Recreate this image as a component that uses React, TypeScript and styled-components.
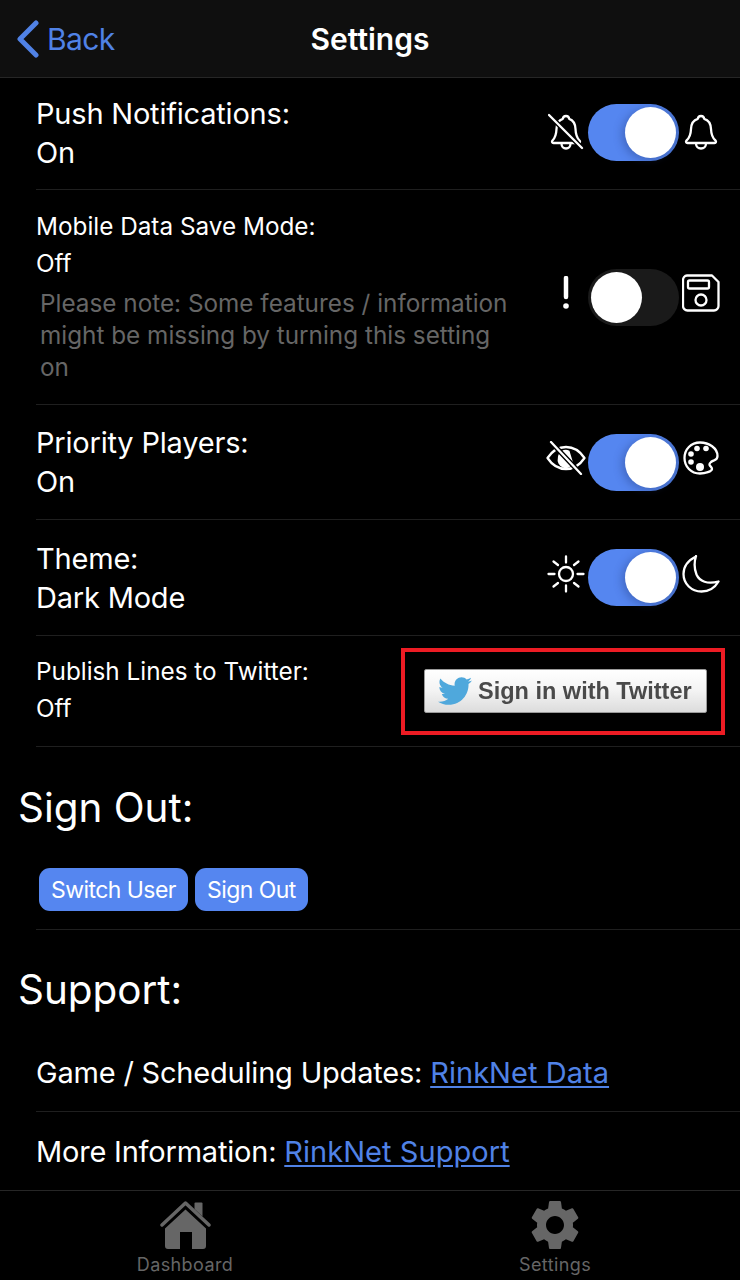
import React from "react";
import styled, { createGlobalStyle } from "styled-components";
import { FaTwitter } from "react-icons/fa";
import { MdSettings } from "react-icons/md";

const GlobalStyle = createGlobalStyle`
  html, body {
    margin: 0;
    padding: 0;
    background: #000;
  }
  body {
    font-family: Inter, "Liberation Sans", sans-serif;
    color: #fff;
  }
`;

const Page = styled.div`
  width: 740px;
  height: 1280px;
  display: flex;
  flex-direction: column;
  overflow: hidden;
  background: #000;
`;

// header
const Header = styled.header`
  height: 77px;
  flex: none;
  display: grid;
  grid-template-columns: 1fr auto 1fr;
  align-items: center;
  background: #0f0f0f;
  border-bottom: 1px solid #262626;
`;
const BackLink = styled.div`
  display: flex;
  align-items: center;
  gap: 7px;
  padding-left: 16px;
  color: #5082e6;
  font-size: 30px;
  letter-spacing: -0.6px;
`;
const Title = styled.div`
  font-size: 30px;
  font-weight: 600;
`;

const Content = styled.main`
  flex: 1;
  min-height: 0;
  overflow: hidden;
`;

// settings rows, $lift raises the contents a little off the row's centre
const Row = styled.section<{ $height: number; $lift?: number }>`
  box-sizing: border-box;
  height: ${p => p.$height}px;
  display: flex;
  align-items: center;
  justify-content: space-between;
  margin-left: 36px;
  padding: 0 21px ${p => p.$lift || 0}px 0;
  border-bottom: 1px solid #1f1f1f;
`;
const LabelBlock = styled.div<{ $lift?: number }>`
  display: flex;
  flex-direction: column;
  padding-bottom: ${p => p.$lift || 0}px;
`;
const Line = styled.div`
  font-size: 29px;
  line-height: 39px;
  letter-spacing: -0.2px;
`;
const SmallLine = styled.div`
  font-size: 24.3px;
  line-height: 37px;
`;
const Note = styled.div`
  width: 470px;
  margin: 5px 0 0 4px;
  color: #666;
  font-size: 24.3px;
  line-height: 32px;
`;

const ToggleGroup = styled.div`
  display: grid;
  grid-template-columns: 36px 91px 36px;
  column-gap: 4px;
  align-items: center;
  justify-items: center;
`;
const Track = styled.div<{ $on: boolean }>`
  width: 91px;
  height: 57px;
  box-sizing: border-box;
  padding: 3px;
  display: flex;
  justify-content: ${p => (p.$on ? "flex-end" : "flex-start")};
  border-radius: 29px;
  background: ${p => (p.$on ? "linear-gradient(90deg, #5586f0 0%, #5586f0 55%, #4a74d0 100%)" : "#1a1a1a")};
`;
const Knob = styled.div<{ $on: boolean }>`
  width: 51px;
  height: 51px;
  border-radius: 50%;
  background: #fff;
  box-shadow: ${p => (p.$on ? "-3px 2px 8px rgba(30, 50, 110, 0.35)" : "none")};
`;
// icons sit a few pixels above the toggle's centre
const Glyph = styled.svg<{ $up?: number }>`
  display: block;
  margin-bottom: ${p => p.$up ?? 8}px;
  fill: none;
  stroke: #fff;
  stroke-width: 2.3;
  stroke-linecap: round;
  stroke-linejoin: round;
`;

const Bell = () => (
  <Glyph $up={2} width="36" height="38" viewBox="0 0 36 38">
    <path d="M18 3c-1.8 0-3 1.2-3.2 2.8C10 7.2 8.200 11 8 16c-.2 5.500-1.500 9-4.500 11.500-1 1-.5 2.500 1 2.500h27c1.500 0 2-1.500 1-2.500C29.500 25 28.200 21.500 28 16c-.2-5-2-8.800-6.800-10.200C21 4.200 19.800 3 18 3z" />
    <path d="M13 30.500c0 3 2.200 5 5 5s5-2 5-5" />
  </Glyph>
);
const BellOff = () => (
  <Glyph $up={2} width="36" height="38" viewBox="0 0 36 38">
    <path d="M18 3c-1.800 0-3 1.200-3.200 2.800C10 7.200 8.700 11 8.500 16c-.2 5.500-1.500 9-4 11.500-1 1-.5 2.500 1 2.500h25c1.500 0 2-1.500 1-2.500C29 25 27.700 21.500 27.500 16c-.2-5-2-8.800-6.300-10.200C21 4.200 19.800 3 18 3z" />
    <path d="M13.500 30.500c0 3 2 5 4.500 5s4.500-2 4.500-5" />
    <path d="M1 2l33 33" stroke="#000" strokeWidth="5" />
    <path d="M1 2l33 33" />
  </Glyph>
);
const Bang = () => (
  <Glyph width="36" height="34" viewBox="0 0 36 34">
    <path d="M18 2v19" strokeWidth="4.500" />
    <circle cx="18" cy="30" r="2.800" fill="#fff" stroke="none" />
  </Glyph>
);
const Floppy = () => (
  <Glyph width="38" height="38" viewBox="0 0 38 38">
    <path d="M5 1.500h25l6.500 6.500V32a4.500 4.500 0 0 1-4.500 4.500H5.500A4.500 4.500 0 0 1 1 32V6a4.500 4.500 0 0 1 4-4.500z" />
    <rect x="6" y="6.500" width="21" height="8" rx="1.500" />
    <circle cx="19" cy="26" r="5.500" />
  </Glyph>
);
const EyeOff = () => (
  <Glyph width="40" height="34" viewBox="0 0 40 34">
    <path d="M1.500 17C6.500 9.500 12.500 6 20 6s13.500 3.500 18.500 11C33.500 24.500 27.500 28 20 28S6.500 24.500 1.500 17z" />
    <path d="M13 17a7 7 0 0 1 9.500-6.500L26 22a7 7 0 0 1-13-5z" fill="#fff" />
    <path d="M5 1l30 32" stroke="#000" strokeWidth="5" />
    <path d="M5 1l30 32" />
  </Glyph>
);
const Palette = () => (
  <Glyph width="36" height="34" viewBox="0 0 36 34">
    <path d="M17 1.500C8 1.500 1.500 8.500 1.500 17S8 32.500 17 32.500c5 0 12-2 12-4.500 0-3-5-3.500-1-7 3-2.500 6.500-1 6.500-6C34.500 7 26 1.500 17 1.500z" />
    <g fill="#fff" stroke="none">
      <circle cx="8" cy="13" r="2.800" />
      <circle cx="14" cy="7.500" r="2.800" />
      <circle cx="23" cy="7.500" r="2.800" />
      <circle cx="8" cy="21" r="2.800" />
      <circle cx="17" cy="26" r="4" />
    </g>
  </Glyph>
);
const Sun = () => (
  <Glyph width="38" height="38" viewBox="0 0 38 38">
    <circle cx="19" cy="19" r="7" />
    <path d="M19 1.500v6M19 30.500v6M1.500 19h6M30.500 19h6M6.500 6.500l4.500 3.500M31.500 6.500L27 10M6.500 31.500L11 28M31.500 31.500L27 28" />
  </Glyph>
);
const Moon = () => (
  <Glyph width="38" height="38" viewBox="0 0 38 38">
    <path d="M14 1.500C6 5.500 1.500 11.500 1.500 19c0 10 8 17.500 18 17.500 7.500 0 13.500-4 17-10-11 3-19 0-22-7-2-5-2.500-12-.5-18.500z" />
  </Glyph>
);

const SettingToggle: React.FC<{ on: boolean; left: React.ReactNode; right: React.ReactNode }> = ({ on, left, right }) => (
  <ToggleGroup>
    {left}
    <Track $on={on}>
      <Knob $on={on} />
    </Track>
    {right}
  </ToggleGroup>
);

// twitter button with the red annotation box
const RedBox = styled.div`
  box-sizing: border-box;
  width: 324px;
  height: 87px;
  display: flex;
  align-items: center;
  justify-content: flex-end;
  margin-right: -6px;
  padding-right: 14px;
  border: 4px solid #ed1c24;
`;
const TwitterButton = styled.div`
  box-sizing: border-box;
  width: 283px;
  height: 44px;
  display: flex;
  align-items: center;
  gap: 6px;
  padding-left: 13px;
  border: 1px solid #9a9a9a;
  border-radius: 2px;
  background: linear-gradient(180deg, #ffffff 0%, #f3f3f3 50%, #dcdcdc 100%);
  color: #4a4a4a;
  font-family: "Liberation Sans", Arial, sans-serif;
  font-size: 23.5px;
  font-weight: 700;
  white-space: nowrap;
  filter: blur(0.6px);
  svg {
    color: #4fa8dc;
    flex: none;
  }
`;

// sections
const SectionTitle = styled.h2<{ $top: number }>`
  margin: ${p => p.$top}px 0 0 18px;
  font-size: 40.4px;
  line-height: 48px;
  font-weight: 400;
`;
const ButtonRow = styled.div`
  display: flex;
  gap: 7px;
  margin: 36px 0 0 36px;
  padding: 0 0 18px 3px;
  border-bottom: 1px solid #1f1f1f;
`;
const BlueButton = styled.div`
  display: flex;
  align-items: center;
  height: 43px;
  padding: 0 12px;
  border-radius: 11px;
  background: #5586f0;
  font-size: 23px;
  letter-spacing: -0.55px;
`;
const LinkList = styled.div`
  margin-top: 19px;
`;
const LinkRow = styled.div<{ $last?: boolean }>`
  display: flex;
  align-items: center;
  height: 78px;
  margin-left: 36px;
  font-size: 29px;
  letter-spacing: -0.2px;
  white-space: pre;
  border-bottom: ${p => (p.$last ? "none" : "1px solid #1f1f1f")};
`;
const TextLink = styled.a`
  color: #5082e6;
  letter-spacing: 0.05px;
  text-decoration: underline;
  text-underline-offset: 3px;
`;

// tab bar
const TabBar = styled.nav`
  height: 89px;
  flex: none;
  display: grid;
  grid-template-columns: 1fr 1fr;
  border-top: 1px solid #262626;
  background: #000;
`;
const Tab = styled.div`
  display: flex;
  flex-direction: column;
  align-items: center;
  padding-top: 8px;
  color: #666;
  font-size: 18px;
  line-height: 22px;
  letter-spacing: 0.4px;
`;
const TabIcon = styled.div`
  height: 52px;
  margin-bottom: 3px;
  display: flex;
  align-items: center;
  justify-content: center;
  svg {
    display: block;
    flex: none;
  }
`;

const Chevron = () => (
  <svg width="24" height="38" viewBox="0 0 24 38" fill="none" stroke="#5082e6" strokeWidth="5" strokeLinecap="round" strokeLinejoin="round">
    <path d="M20 3L4 19l16 16" />
  </svg>
);
const HomeIcon = () => (
  <svg width="51" height="49" viewBox="0 0 51 49">
    <path d="M2 24L25.500 2 49 24" fill="none" stroke="#666" strokeWidth="3.500" strokeLinecap="round" strokeLinejoin="round" />
    <path d="M34.500 8V2.500a1 1 0 0 1 1-1h6a1 1 0 0 1 1 1V15.500z" fill="#666" />
    <path d="M25.500 8.500L46 27.500V45a3 3 0 0 1-3 3H32V31H20v17H8a3 3 0 0 1-3-3V27.500z" fill="#666" />
  </svg>
);

export default function App() {
  return (
    <Page>
      <GlobalStyle />
      <Header>
        <BackLink>
          <Chevron />
          Back
        </BackLink>
        <Title>Settings</Title>
      </Header>
      <Content>
        <Row $height={112} $lift={2}>
          <LabelBlock>
            <Line>Push Notifications:</Line>
            <Line>On</Line>
          </LabelBlock>
          <SettingToggle on left={<BellOff />} right={<Bell />} />
        </Row>
        <Row $height={215}>
          <LabelBlock $lift={3}>
            <SmallLine>Mobile Data Save Mode:</SmallLine>
            <SmallLine>Off</SmallLine>
            <Note>Please note: Some features / information might be missing by turning this setting on</Note>
          </LabelBlock>
          <SettingToggle on={false} left={<Bang />} right={<Floppy />} />
        </Row>
        <Row $height={115}>
          <LabelBlock>
            <Line>Priority Players:</Line>
            <Line>On</Line>
          </LabelBlock>
          <SettingToggle on left={<EyeOff />} right={<Palette />} />
        </Row>
        <Row $height={116}>
          <LabelBlock>
            <Line>Theme:</Line>
            <Line>Dark Mode</Line>
          </LabelBlock>
          <SettingToggle on left={<Sun />} right={<Moon />} />
        </Row>
        <Row $height={111}>
          <LabelBlock $lift={3}>
            <SmallLine>Publish Lines to Twitter:</SmallLine>
            <SmallLine>Off</SmallLine>
          </LabelBlock>
          <RedBox>
            <TwitterButton>
              <FaTwitter size={34} />
              Sign in with Twitter
            </TwitterButton>
          </RedBox>
        </Row>
        <SectionTitle $top={37}>Sign Out:</SectionTitle>
        <ButtonRow>
          <BlueButton>Switch User</BlueButton>
          <BlueButton>Sign Out</BlueButton>
        </ButtonRow>
        <SectionTitle $top={36}>Support:</SectionTitle>
        <LinkList>
          <LinkRow>
            Game / Scheduling Updates: <TextLink>RinkNet Data</TextLink>
          </LinkRow>
          <LinkRow $last>
            More Information: <TextLink>RinkNet Support</TextLink>
          </LinkRow>
        </LinkList>
      </Content>
      <TabBar>
        <Tab>
          <TabIcon>
            <HomeIcon />
          </TabIcon>
          Dashboard
        </Tab>
        <Tab>
          <TabIcon>
            <MdSettings size={60} />
          </TabIcon>
          Settings
        </Tab>
      </TabBar>
    </Page>
  );
}
